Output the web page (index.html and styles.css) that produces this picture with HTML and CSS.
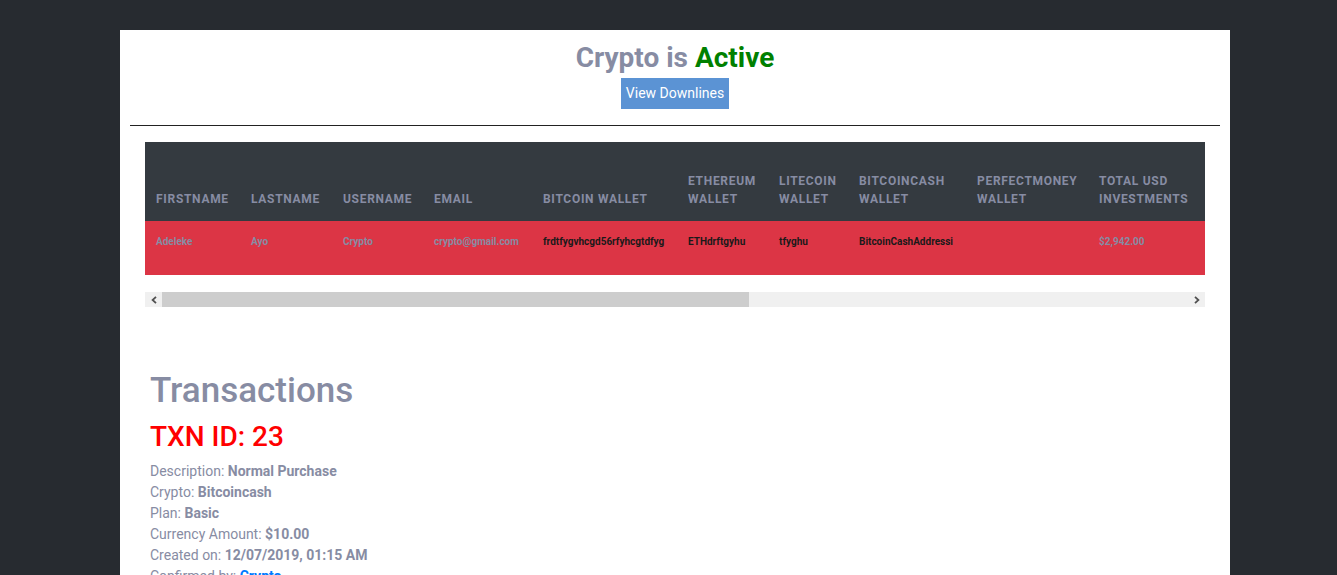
FILE: index.html
```html
<!DOCTYPE html>
<html lang="en">
<head>
    <meta charset="UTF-8">
    <meta name="viewport" content="width=device-width, initial-scale=1.0">
    <title>Crypto - Admin</title>
    <link rel="stylesheet" href="styles.css">
</head>
<body>

<div class="container">
    <div class="status">
        <h3>Crypto is <span class="active">Active</span></h3>
        <button class="btn-downlines">View Downlines</button>
    </div>
    <hr>

    <div class="table-box">
        <div class="table-scroll">
            <table class="users">
                <thead>
                    <tr>
                        <th class="w-first">Firstname</th>
                        <th class="w-last">Lastname</th>
                        <th class="w-user">Username</th>
                        <th class="w-email">Email</th>
                        <th class="w-btc">Bitcoin Wallet</th>
                        <th class="w-eth">Ethereum Wallet</th>
                        <th class="w-ltc">Litecoin Wallet</th>
                        <th class="w-bch">Bitcoincash Wallet</th>
                        <th class="w-pm">Perfectmoney Wallet</th>
                        <th class="w-total">Total USD Investments</th>
                        <th class="w-extra">Total Withdrawals</th>
                        <th class="w-extra">Referred By</th>
                        <th class="w-extra">Date Joined</th>
                        <th class="w-extra">Status</th>
                        <th class="w-extra">Action</th>
                    </tr>
                </thead>
                <tbody>
                    <tr>
                        <td>Adeleke</td>
                        <td>Ayo</td>
                        <td>Crypto</td>
                        <td>crypto@gmail.com</td>
                        <td class="dark">frdtfygvhcgd56rfyhcgtdfyg</td>
                        <td class="dark">ETHdrftgyhu</td>
                        <td class="dark">tfyghu</td>
                        <td class="dark">BitcoinCashAddressi</td>
                        <td class="dark"></td>
                        <td>$2,942.00</td>
                        <td>$0.00</td>
                        <td>-</td>
                        <td>12/07/2019</td>
                        <td>Active</td>
                        <td>Edit</td>
                    </tr>
                </tbody>
            </table>
        </div>
        <div class="fake-scrollbar">
            <span class="sb-btn">
                <svg width="6" height="8" viewBox="0 0 6 8"><polyline points="5,0.8 1.6,4 5,7.2" fill="none" stroke="#505050" stroke-width="1.8"/></svg>
            </span>
            <div class="sb-track"><div class="sb-thumb"></div></div>
            <span class="sb-btn">
                <svg width="6" height="8" viewBox="0 0 6 8"><polyline points="1,0.8 4.4,4 1,7.2" fill="none" stroke="#505050" stroke-width="1.8"/></svg>
            </span>
        </div>
    </div>

    <div class="transactions">
        <h1>Transactions</h1>
        <h2 class="txn-id">TXN ID: 23</h2>
        <p>Description: <b>Normal Purchase</b></p>
        <p>Crypto: <b>Bitcoincash</b></p>
        <p>Plan: <b>Basic</b></p>
        <p>Currency Amount: <b>$10.00</b></p>
        <p>Created on: <b>12/07/2019, 01:15 AM</b></p>
        <p>Confirmed by: <b class="link">Crypto</b></p>
    </div>
</div>

</body>
</html>
```

FILE: styles.css
```css
body {
    font-family: Roboto, "Liberation Sans", sans-serif;
    margin: 0;
    padding: 0;
    background-color: #272b30;
    color: #878ca3;
}
.container {
    width: 1090px;
    margin: 30px 0 0 120px;
    padding: 10px;
    background-color: white;
    min-height: 600px;
}
.status {
    text-align: center;
}
.status h3 {
    margin: 0;
    font-size: 28px;
    line-height: 35px;
    font-weight: 700;
    color: #878ca3;
}
.active {
    color: #008000;
}
.btn-downlines {
    margin-top: 3px;
    padding: 6px 5px;
    font-family: inherit;
    font-size: 14px;
    line-height: 19px;
    color: white;
    background-color: #5b93d4;
    border: none;
    cursor: pointer;
}
hr {
    margin: 16px 0 16px;
    border: none;
    border-top: 1px solid #222;
}
.table-box {
    padding: 0 15px;
}
.table-scroll {
    overflow: hidden;
}
.users {
    table-layout: fixed;
    width: 1853px;
    border-collapse: collapse;
    margin-bottom: 17px;
}
.users th,
.users td {
    box-sizing: border-box;
}
.users th {
    background-color: #343a40;
    color: #878ca3;
    font-size: 12px;
    line-height: 18px;
    font-weight: 700;
    text-transform: uppercase;
    letter-spacing: 0.7px;
    text-align: left;
    vertical-align: bottom;
    padding: 0 11px 13px;
    height: 79px;
}
.users td {
    background-color: #dc3545;
    color: #878ca3;
    font-size: 10px;
    line-height: 12px;
    font-weight: 700;
    vertical-align: top;
    padding: 15px 11px 0;
    height: 54px;
    white-space: nowrap;
    overflow: hidden;
}
.users td.dark {
    color: #1a1a1a;
}
.w-first { width: 95px; }
.w-last { width: 92px; }
.w-user { width: 91px; }
.w-email { width: 109px; }
.w-btc { width: 145px; }
.w-eth { width: 91px; }
.w-ltc { width: 80px; }
.w-bch { width: 118px; }
.w-pm { width: 122px; }
.w-total { width: 130px; }
.w-extra { width: 156px; }
.fake-scrollbar {
    display: flex;
    height: 15px;
    background-color: #f0f0f0;
}
.sb-btn {
    width: 17px;
    display: flex;
    align-items: center;
    justify-content: center;
}
.sb-track {
    flex: 1;
}
.sb-thumb {
    width: 587px;
    height: 100%;
    background-color: #cdcdcd;
}
.transactions {
    padding: 63px 10px 0 20px;
}
.transactions h1 {
    margin: 0;
    font-size: 35px;
    line-height: 42px;
    font-weight: 500;
    color: #878ca3;
}
.txn-id {
    margin: 8px 0 7px;
    font-size: 28px;
    line-height: 34px;
    font-weight: 500;
    color: #ff0000;
}
.transactions p {
    margin: 0;
    font-size: 14px;
    line-height: 21px;
}
.transactions b {
    font-weight: 700;
}
.link {
    color: #007bff;
}
```
